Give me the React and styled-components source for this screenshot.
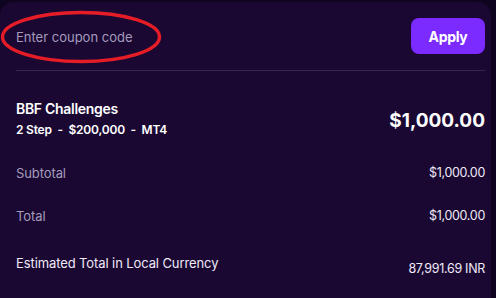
import styled, { createGlobalStyle } from 'styled-components';

const GlobalStyle = createGlobalStyle`
  html, body {
    margin: 0;
    padding: 0;
    background: #0e0420;
  }
  body {
    font-family: Inter, "Noto Sans", "Liberation Sans", sans-serif;
    -webkit-font-smoothing: antialiased;
  }
`;

export default function App() {
  return (
    <>
      <GlobalStyle />
      <Page>
        <Card>
          {/* coupon row */}
          <CouponRow>
            <CouponInput type="text" placeholder="Enter coupon code" />
            <ApplyButton>Apply</ApplyButton>
            <Annotation viewBox="0 0 164 56" width="164" height="56">
              <ellipse cx="81" cy="27" rx="78.5" ry="24.5" fill="none" stroke="#e61d26" strokeWidth="3.4" />
            </Annotation>
          </CouponRow>

          {/* product */}
          <Product>
            <ProductInfo>
              <ProductName>BBF Challenges</ProductName>
              <ProductMeta>2 Step&nbsp; -&nbsp; $200,000&nbsp; -&nbsp; MT4</ProductMeta>
            </ProductInfo>
            <BigPrice>$1,000.00</BigPrice>
          </Product>

          <Row>
            <Label>Subtotal</Label>
            <Value>$1,000.00</Value>
          </Row>
          <Row>
            <Label>Total</Label>
            <Value>$1,000.00</Value>
          </Row>
          <Row $last>
            <Label $light>Estimated Total in Local Currency</Label>
            <Value $drop>87,991.69 INR</Value>
          </Row>
        </Card>
      </Page>
    </>
  );
}

const Page = styled.div`
  width: 496px;
  height: 298px;
  overflow: hidden;
  padding-top: 2px;
  box-sizing: border-box;
`;

const Card = styled.div`
  box-sizing: border-box;
  width: 491px;
  height: 310px;
  background: #1a0833;
  border-radius: 14px;
  padding: 0 6px 0 16px;
  display: flex;
  flex-direction: column;
`;

const CouponRow = styled.div`
  position: relative;
  display: flex;
  align-items: center;
  justify-content: space-between;
  height: 69px;
  border-bottom: 1px solid #352550;
  box-sizing: border-box;
`;

const CouponInput = styled.input`
  background: transparent;
  border: none;
  outline: none;
  width: 300px;
  padding: 0;
  margin-top: 2px;
  font-family: Inter, "Noto Sans", sans-serif;
  font-size: 13px;
  color: #fff;

  &::placeholder {
    color: #a59cbb;
  }
`;

const ApplyButton = styled.button`
  width: 74px;
  height: 36px;
  border: none;
  border-radius: 8px;
  background: #7b2bff;
  color: #ffffff;
  font-family: Inter, "Noto Sans", sans-serif;
  font-weight: 700;
  font-size: 14px;
  letter-spacing: -0.3px;
  cursor: pointer;
`;

const Annotation = styled.svg`
  position: absolute;
  left: -16px;
  top: 8px;
  pointer-events: none;
`;

const Product = styled.div`
  display: flex;
  align-items: center;
  justify-content: space-between;
  padding: 29px 0 12px;
`;

const ProductInfo = styled.div`
  display: flex;
  flex-direction: column;
  gap: 3px;
`;

const ProductName = styled.div`
  font-size: 14px;
  line-height: 18px;
  font-weight: 600;
  color: #ffffff;
  letter-spacing: -0.3px;
`;

const ProductMeta = styled.div`
  font-size: 12px;
  line-height: 18px;
  font-weight: 600;
  color: #ffffff;
  letter-spacing: -0.2px;
`;

const BigPrice = styled.div`
  font-size: 19px;
  font-weight: 700;
  color: #ffffff;
  margin-top: 2px;
`;

const Row = styled.div`
  display: flex;
  align-items: ${p => (p.$last ? 'flex-start' : 'center')};
  justify-content: space-between;
  height: ${p => (p.$last ? 'auto' : '43px')};
  padding-top: ${p => (p.$last ? '16px' : '0')};
`;

const Label = styled.div`
  font-size: 13px;
  line-height: 20px;
  color: ${p => (p.$light ? '#efeaf7' : '#a59cbb')};
  letter-spacing: -0.1px;
`;

const Value = styled.div`
  font-size: 12.5px;
  line-height: 20px;
  color: #efeaf7;
  letter-spacing: -0.3px;
  margin-top: ${p => (p.$drop ? '6px' : '0')};
`;
